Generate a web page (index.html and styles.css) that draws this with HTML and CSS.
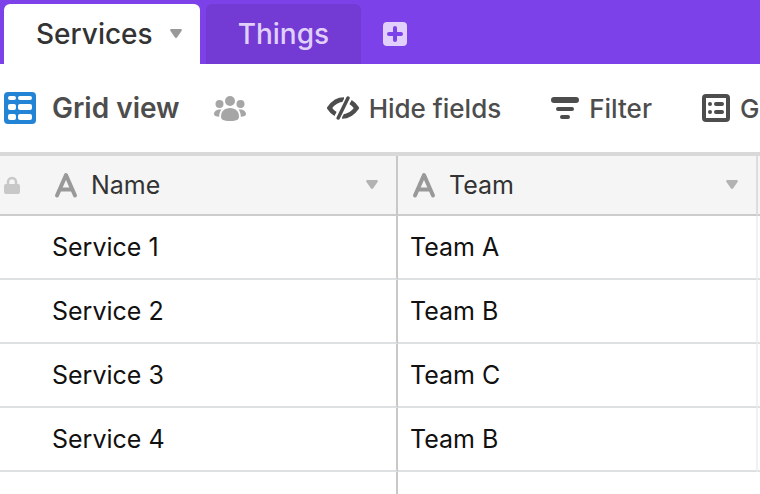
FILE: index.html
```html
<!DOCTYPE html>
<html lang="en">
<head>
    <meta charset="UTF-8">
    <meta name="viewport" content="width=device-width, initial-scale=1.0">
    <title>Services</title>
    <link rel="stylesheet" href="styles.css">
</head>
<body>
    <nav class="tabs">
        <button type="button" class="tab active">
            Services
            <svg class="arrow" width="12" height="10" viewBox="0 0 12 10"><path d="M1.5 0h9c1.200 0 1.800 1 1 2L7.200 8.200c-.7 1-1.700 1-2.400 0L.5 2C-.3 1 .3 0 1.500 0z"/></svg>
        </button>
        <button type="button" class="tab">Things</button>
        <button type="button" class="add" aria-label="Add table">
            <svg width="24" height="24" viewBox="0 0 24 24">
                <rect width="24" height="24" rx="4" fill="#e0d0fb"/>
                <path d="M12 6v12M6 12h12" stroke="#7c41e8" stroke-width="4" stroke-linecap="round"/>
            </svg>
        </button>
    </nav>

    <div class="toolbar">
        <button type="button" class="tool view">
            <svg width="32" height="32" viewBox="0 0 32 32">
                <rect width="32" height="32" rx="4" fill="#2383d5"/>
                <g fill="white">
                    <rect x="4" y="4" width="8" height="4" rx="2"/>
                    <rect x="14" y="4" width="14" height="4" rx="2"/>
                    <rect x="4" y="12" width="8" height="6" rx="2"/>
                    <rect x="14" y="12" width="14" height="6" rx="2"/>
                    <rect x="4" y="22" width="8" height="6" rx="2"/>
                    <rect x="14" y="22" width="14" height="6" rx="2"/>
                </g>
            </svg>
            Grid view
        </button>
        <button type="button" class="tool people" aria-label="Collaborators">
            <svg width="32" height="26" viewBox="0 0 32 26" fill="#a6a6a6">
                <circle cx="16" cy="6" r="5"/>
                <circle cx="5.500" cy="9" r="4"/>
                <circle cx="26.500" cy="9" r="4"/>
                <path d="M16 13c5.500 0 9 3.500 9 8.500 0 3-2 4.500-9 4.500s-9-1.500-9-4.500c0-5 3.500-8.500 9-8.500z"/>
                <path d="M7.500 14.500C6 16.500 5.200 18.500 5.200 21.700 2 21.700 0 21 0 19 0 16 3 14 7.500 14.500z"/>
                <path d="M24.500 14.500c1.500 2 2.300 4 2.300 7.200 3.200 0 5.200-.7 5.200-2.700 0-3-3-5-7.500-4.500z"/>
            </svg>
        </button>
        <button type="button" class="tool hide">
            <svg width="32" height="24" viewBox="0 0 32 24" fill="none" stroke="#4d4d4d" stroke-width="4.500">
                <path d="M17 3.500C10.500 3.500 5.500 7.500 2.400 12c1.500 2.400 3.500 4.500 6.200 6"/>
                <path d="M23.500 6c2.700 1.700 4.600 3.600 6.100 6-3 4.500-8 8.500-14.600 8.500"/>
                <path d="M21.500 2L10.700 22" stroke="white" stroke-width="7"/>
                <path d="M21 2L11.200 22" stroke-width="3.500" stroke-linecap="round"/>
            </svg>
            Hide fields
        </button>
        <button type="button" class="tool filter">
            <svg width="28" height="22" viewBox="0 0 28 22" fill="#4d4d4d">
                <rect width="28" height="6" rx="3"/>
                <rect x="5" y="10" width="18" height="4" rx="2"/>
                <rect x="9" y="18" width="10" height="4" rx="2"/>
            </svg>
            Filter
        </button>
        <button type="button" class="tool">
            <svg width="28" height="28" viewBox="0 0 28 28" fill="#4d4d4d">
                <rect x="2" y="2" width="24" height="24" rx="2" fill="none" stroke="#4d4d4d" stroke-width="4"/>
                <circle cx="8" cy="10" r="2"/>
                <circle cx="8" cy="18" r="2"/>
                <rect x="12" y="8" width="10" height="4" rx="2"/>
                <rect x="12" y="16" width="10" height="4" rx="2"/>
            </svg>
            Group
        </button>
    </div>

    <table class="grid">
        <colgroup>
            <col class="name-col">
            <col class="team-col">
            <col>
        </colgroup>
        <thead>
            <tr>
                <th>
                    <div class="field">
                        <svg class="lock" width="16" height="18" viewBox="0 0 16 18"><path d="M4 10V6a4 4 0 0 1 8 0v4" fill="none" stroke="#c8c8c8" stroke-width="2.500"/><rect y="8" width="16" height="10" rx="2" fill="#c8c8c8"/></svg>
                        <svg class="type" width="24" height="28" viewBox="0 0 24 28"><path d="M3 24.500L12 4l9 20.500M6.500 18.500h11"/></svg>
                        Name
                        <svg class="arrow" width="12" height="10" viewBox="0 0 12 10"><path d="M1.500 0h9c1.200 0 1.800 1 1 2L7.200 8.200c-.7 1-1.700 1-2.400 0L.5 2C-.3 1 .3 0 1.500 0z"/></svg>
                    </div>
                </th>
                <th>
                    <div class="field">
                        <svg class="type" width="24" height="28" viewBox="0 0 24 28"><path d="M3 24.500L12 4l9 20.500M6.500 18.500h11"/></svg>
                        Team
                        <svg class="arrow" width="12" height="10" viewBox="0 0 12 10"><path d="M1.500 0h9c1.200 0 1.800 1 1 2L7.200 8.200c-.7 1-1.700 1-2.400 0L.5 2C-.3 1 .3 0 1.500 0z"/></svg>
                    </div>
                </th>
                <th></th>
            </tr>
        </thead>
        <tbody>
            <tr><td>Service 1</td><td>Team A</td><td></td></tr>
            <tr><td>Service 2</td><td>Team B</td><td></td></tr>
            <tr><td>Service 3</td><td>Team C</td><td></td></tr>
            <tr><td>Service 4</td><td>Team B</td><td></td></tr>
        </tbody>
        <tfoot>
            <tr><td></td><td></td><td></td></tr>
        </tfoot>
    </table>
</body>
</html>
```
FILE: styles.css
```css
* {
    box-sizing: border-box;
}

body {
    margin: 0;
    background-color: white;
    font-family: Inter, "Liberation Sans", sans-serif;
    font-size: 26px;
    overflow: hidden;
}

button {
    border: 0;
    padding: 0;
    background: none;
    font: inherit;
    white-space: nowrap;
    cursor: pointer;
}

svg {
    display: block;
    flex: none;
}

.arrow {
    fill: #b3b3b3;
}

.tabs {
    display: flex;
    gap: 6px;
    height: 64px;
    padding: 4px 4px 0;
    background-color: #7c41e8;
}

.tab {
    display: flex;
    align-items: center;
    gap: 17px;
    padding: 0 32px;
    border-radius: 6px 6px 0 0;
    background-color: #733bd3;
    color: #e0d0fb;
    font-size: 28px;
    font-weight: 500;
}

.tab.active {
    padding-right: 18px;
    background-color: white;
    color: #333;
}

.tab .arrow {
    fill: #999;
}

.add {
    padding: 0 16px;
}

.toolbar {
    display: flex;
    align-items: center;
    height: 88px;
    padding: 0 4px;
}

.tool {
    display: flex;
    align-items: center;
    gap: 10px;
    color: #4d4d4d;
    font-weight: 500;
}

.view {
    gap: 16px;
    margin-right: 34px;
    font-size: 28px;
    font-weight: 600;
}

.people {
    margin-right: 81px;
}

.hide,
.filter {
    margin-right: 50px;
}

.grid {
    width: 100%;
    table-layout: fixed;
    border-collapse: separate;
    border-spacing: 0;
    border-top: 4px solid #d9d9d9;
    font-size: 25px;
}

.name-col {
    width: 398px;
}

.team-col {
    width: 360px;
}

th,
td {
    height: 64px;
    padding: 0 12px;
    border-bottom: 2px solid #dde1e1;
    border-right: 2px solid #f0f0f0;
    color: #111;
    font-weight: 400;
    text-align: left;
}

th {
    height: 60px;
    padding-left: 14px;
    background-color: #f5f5f5;
    border-bottom-color: #ccc;
    border-right-color: #ddd;
    color: #333;
}

td:first-child {
    padding-left: 52px;
}

th:first-child {
    padding-left: 4px;
}

th:first-child,
td:first-child {
    border-right-color: #c8c8c8;
}

th:last-child,
td:last-child {
    padding: 0;
    border-right: 0;
}

.field {
    display: flex;
    align-items: center;
    padding-right: 6px;
}

.field .arrow {
    margin-left: auto;
}

.lock {
    margin-right: 34px;
}

.type {
    margin-right: 13px;
    fill: none;
    stroke: #999;
    stroke-width: 4;
    stroke-linecap: round;
    stroke-linejoin: round;
}

tfoot td {
    height: 22px;
    border-bottom: 0;
}

tfoot td:not(:first-child) {
    border-right: 0;
}
```
